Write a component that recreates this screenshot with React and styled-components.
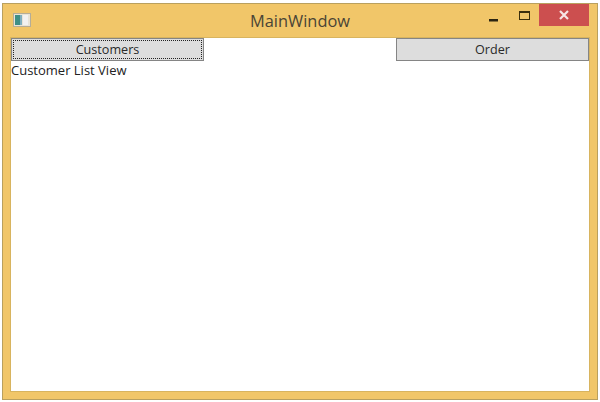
import React from "react";
import styled, { createGlobalStyle } from "styled-components";

const Global = createGlobalStyle`
  html, body { margin: 0; padding: 0; background: #fff; width: 600px; height: 402px; overflow: hidden; }
  #root { width: 600px; height: 402px; }
`;

const Page = styled.div`
  width: 600px;
  height: 402px;
  box-sizing: border-box;
  padding: 3px 2px 2px 2px;
  background: #fff;
  font-family: "Open Sans", "Noto Sans", sans-serif;
`;

const Frame = styled.div`
  height: 100%;
  box-sizing: border-box;
  display: flex;
  flex-direction: column;
  background: #f1c669;
  border: 1px solid #b9a05f;
  padding: 0 8px 8px 8px;
`;

const TitleBar = styled.div`
  height: 34px;
  flex: none;
  display: grid;
  grid-template-columns: 1fr auto 1fr;
  align-items: start;
`;

const AppIcon = styled.svg`
  width: 18px;
  height: 14px;
  margin: 9px 0 0 2px;
  display: block;
`;

const Title = styled.div`
  font-size: 16.4px;
  line-height: 22px;
  color: #4a4436;
  padding-top: 6px;
`;

const Controls = styled.div`
  display: flex;
  justify-content: flex-end;
  align-items: flex-start;
`;

const GlyphSlot = styled.div`
  width: ${(p) => p.$w}px;
  height: 22px;
  display: flex;
  align-items: center;
  justify-content: center;
`;

const CloseButton = styled.div`
  width: 50px;
  height: 22px;
  background: #cc4f4f;
  display: flex;
  align-items: center;
  justify-content: center;
`;

const Client = styled.div`
  flex: 1;
  background: #fff;
  outline: 1px solid #d8b45f;
`;

const ButtonRow = styled.div`
  display: grid;
  grid-template-columns: 193px 1fr 193px;
  height: 23px;
`;

const Button = styled.div`
  grid-column: ${(p) => p.$col};
  box-sizing: border-box;
  background: #dddddd;
  border: 1px solid #858585;
  display: flex;
  align-items: center;
  justify-content: center;
  font-size: 12.6px;
  color: #2a2a2a;
  position: relative;
  ${(p) =>
    p.$focused &&
    `&::after {
      content: "";
      position: absolute;
      inset: 1px;
      border: 1px dotted #222;
    }`}
`;

const ViewLabel = styled.div`
  font-size: 13px;
  line-height: 16px;
  color: #222;
  padding-top: 1px;
`;

export default function App() {
  return (
    <Page>
      <Global />
      <Frame>
        <TitleBar>
          <AppIcon viewBox="0 0 18 14">
            <rect x="0.5" y="0.5" width="17" height="13" fill="#e8e4d8" stroke="#b5ad98" />
            <rect x="2" y="2" width="5" height="10" fill="#3f8f86" />
            <rect x="7" y="2" width="2" height="10" fill="#7fb0c0" />
            <rect x="10" y="2" width="5" height="10" fill="#f2f2f2" />
          </AppIcon>
          <Title>MainWindow</Title>
          <Controls>
            <GlyphSlot $w={32}>
              <svg width="10" height="22" viewBox="0 0 10 22">
                <rect x="0" y="15" width="9" height="2.5" fill="#2b2412" />
              </svg>
            </GlyphSlot>
            <GlyphSlot $w={29}>
              <svg width="11" height="22" viewBox="0 0 11 22">
                <rect x="0.5" y="7.5" width="10" height="8" fill="none" stroke="#3b2f0c" strokeWidth="1" />
                <rect x="0.5" y="7" width="10" height="2" fill="#3b2f0c" />
              </svg>
            </GlyphSlot>
            <CloseButton>
              <svg width="12" height="12" viewBox="0 0 12 12">
                <path d="M2 2 L10 10 M10 2 L2 10" stroke="#f7e6e6" strokeWidth="2.2" fill="none" />
              </svg>
            </CloseButton>
          </Controls>
        </TitleBar>
        <Client>
          <ButtonRow>
            <Button $col={1} $focused>Customers</Button>
            <Button $col={3}>Order</Button>
          </ButtonRow>
          <ViewLabel>Customer List View</ViewLabel>
        </Client>
      </Frame>
    </Page>
  );
}
